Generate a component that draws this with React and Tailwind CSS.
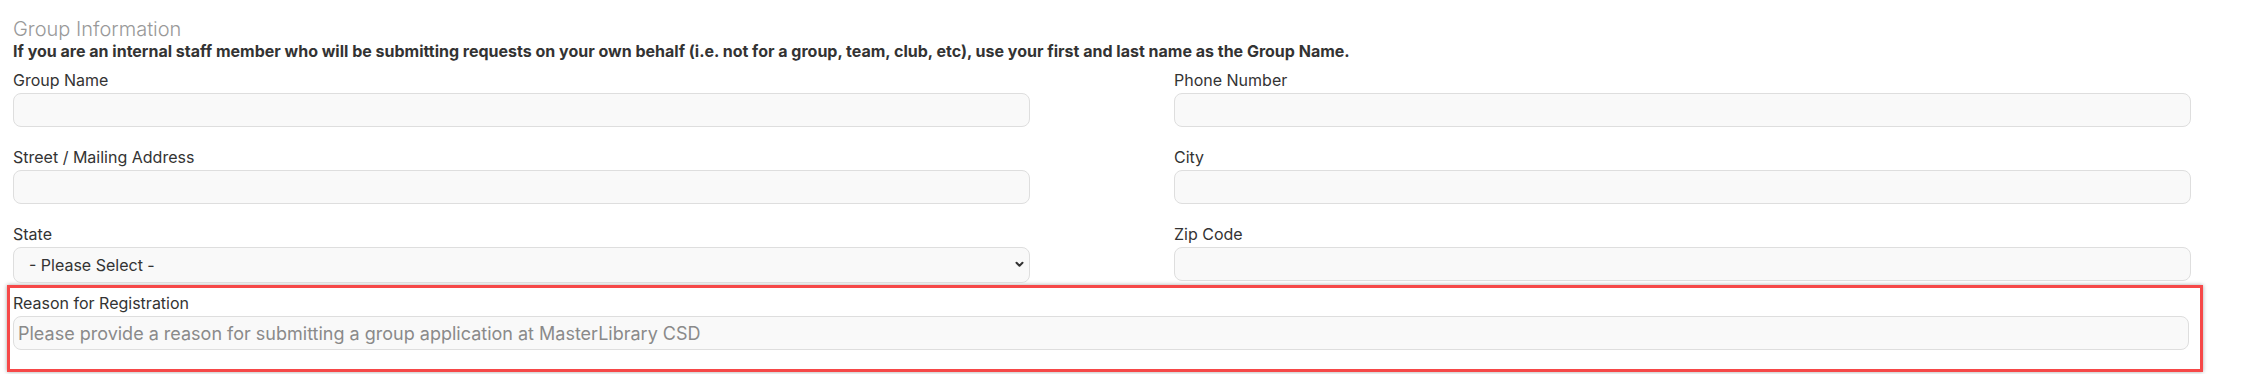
import { useState } from 'react'

const font = { fontFamily: 'Inter, "Noto Sans", sans-serif' }

function Field({ label, children }) {
  return (
    <div className="flex flex-col">
      <label className="text-[16px] leading-[20px] text-[#333] mb-[3px]">{label}</label>
      {children}
    </div>
  )
}

function TextInput({ placeholder }) {
  return (
    <input
      type="text"
      placeholder={placeholder}
      className="w-full h-[34px] rounded-[8px] border border-[#dedede] bg-[#f9f9f9] px-[4px] text-[18px] text-[#333] placeholder-[#8a8a8a] focus:outline-none"
    />
  )
}

export default function App() {
  const [state, setState] = useState('')

  return (
    <div className="w-[2265px] h-[374px] bg-white overflow-hidden pl-[13px] pt-[18px]" style={font}>
      <div className="w-[2178px]">
        <h3 className="text-[20px] leading-[23px] font-light text-[#999]">Group Information</h3>
        <p className="text-[16px] leading-[20px] font-bold text-[#333]">
          If you are an internal staff member who will be submitting requests on your own behalf (i.e. not for a group, team, club, etc), use your first and last name as the Group Name.
        </p>

        <div className="grid grid-cols-2 gap-x-[144px] mt-[9px]">
          <Field label="Group Name"><TextInput /></Field>
          <Field label="Phone Number"><TextInput /></Field>
        </div>
        <div className="grid grid-cols-2 gap-x-[144px] mt-[20px]">
          <Field label="Street / Mailing Address"><TextInput /></Field>
          <Field label="City"><TextInput /></Field>
        </div>
        <div className="grid grid-cols-2 gap-x-[144px] mt-[20px]">
          <Field label="State">
            <div className="relative">
              <select
                value={state}
                onChange={e => setState(e.target.value)}
                className="appearance-none w-full h-[36px] rounded-[8px] border border-[#dedede] bg-[#f9f9f9] pl-[15px] pr-8 text-[16px] text-[#333] focus:outline-none"
              >
                <option value="">- Please Select -</option>
                <option value="AL">Alabama</option>
                <option value="NY">New York</option>
              </select>
              <svg className="absolute right-[6px] top-[14px] pointer-events-none" width="9" height="7" viewBox="0 0 9 7" fill="none" stroke="#333" strokeWidth="2" strokeLinecap="round" strokeLinejoin="round">
                <polyline points="1.5 1.8 4.5 4.8 7.5 1.8" />
              </svg>
            </div>
          </Field>
          <Field label="Zip Code"><TextInput /></Field>
        </div>
      </div>

      <div className="-ml-[6px] mt-[2px] w-[2196px] border-[3px] border-[#f64848] shadow-[0_0_4px_rgba(0,0,0,0.35)] pl-[3px] pr-[11px] pt-[5px] pb-[19px]">
        <Field label="Reason for Registration">
          <TextInput placeholder="Please provide a reason for submitting a group application at MasterLibrary CSD" />
        </Field>
      </div>
    </div>
  )
}
